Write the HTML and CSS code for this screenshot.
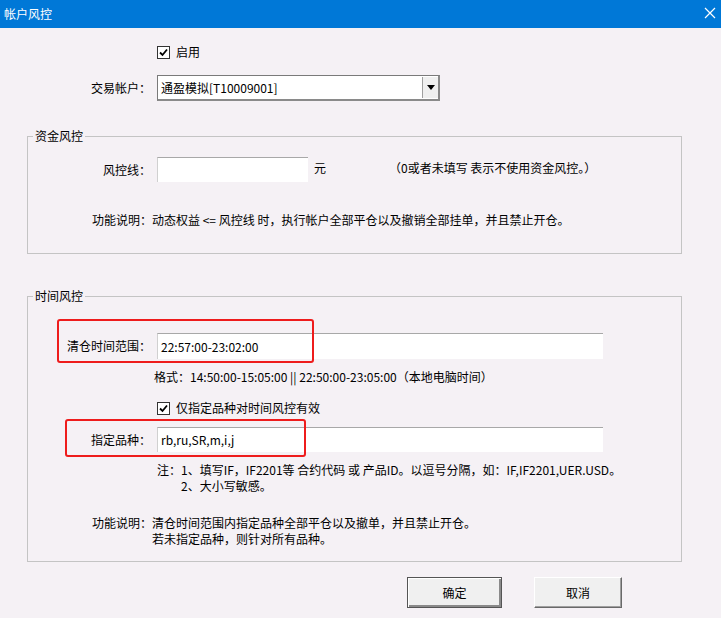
FILE: index.html
```html
<!DOCTYPE html>
<html lang="zh-CN">
<head>
    <meta charset="UTF-8">
    <title>帐户风控</title>
    <link rel="stylesheet" href="styles.css">
</head>
<body>

    <div class="titlebar">
        <span class="title">帐户风控</span>
        <svg class="close" width="12" height="12" viewBox="0 0 12 12">
            <path d="M1 1 L11 11 M11 1 L1 11" stroke="#fff" stroke-width="1.2" fill="none"/>
        </svg>
    </div>

    <div class="dialog">
        <div class="row row-enable">
            <label class="check">
                <span class="box"><svg width="11" height="11" viewBox="0 0 11 11"><path d="M2 5.5 L4.5 8 L9 2.5" stroke="#000" stroke-width="1.8" fill="none"/></svg></span>
                启用
            </label>
        </div>

        <div class="row row-account">
            <span class="label">交易帐户：</span>
            <div class="combo">
                <span class="combo-text">通盈模拟[T10009001]</span>
                <span class="combo-btn"><svg width="8" height="5" viewBox="0 0 8 5"><path d="M0 0 H8 L4 5 Z" fill="#000"/></svg></span>
            </div>
        </div>

        <fieldset class="group group-money">
            <legend>资金风控</legend>
            <div class="row row-line">
                <span class="label">风控线：</span>
                <div class="input input-short"></div>
                <span class="unit">元</span>
                <span class="hint">（0或者未填写 表示不使用资金风控。）</span>
            </div>
            <div class="desc desc-money">
                <span class="desc-label">功能说明：</span>
                <div>动态权益 &lt;= 风控线 时，执行帐户全部平仓以及撤销全部挂单，并且禁止开仓。</div>
            </div>
        </fieldset>

        <fieldset class="group group-time">
            <legend>时间风控</legend>
            <div class="row row-range">
                <span class="mark mark-range"></span>
                <span class="label">清仓时间范围：</span>
                <div class="input input-long">22:57:00-23:02:00</div>
            </div>
            <div class="format">格式：14:50:00-15:05:00 || 22:50:00-23:05:00（本地电脑时间）</div>

            <div class="row row-only">
                <label class="check">
                    <span class="box"><svg width="11" height="11" viewBox="0 0 11 11"><path d="M2 5.5 L4.5 8 L9 2.5" stroke="#000" stroke-width="1.8" fill="none"/></svg></span>
                    仅指定品种对时间风控有效
                </label>
            </div>

            <div class="row row-kind">
                <span class="mark mark-kind"></span>
                <span class="label">指定品种：</span>
                <div class="input input-long">rb,ru,SR,m,i,j</div>
            </div>

            <div class="note">
                <span class="note-label">注：</span>
                <div>
                    <div>1、填写IF，IF2201等 合约代码 或 产品ID。以逗号分隔，如：IF,IF2201,UER.USD。</div>
                    <div>2、大小写敏感。</div>
                </div>
            </div>

            <div class="desc desc-time">
                <span class="desc-label">功能说明：</span>
                <div>
                    <div>清仓时间范围内指定品种全部平仓以及撤单，并且禁止开仓。</div>
                    <div>若未指定品种，则针对所有品种。</div>
                </div>
            </div>
        </fieldset>

        <div class="buttons">
            <button class="btn btn-default">确定</button>
            <button class="btn">取消</button>
        </div>
    </div>

</body>
</html>
```

FILE: styles.css
```css
body {
    margin: 0;
    padding: 0;
    width: 721px;
    height: 618px;
    overflow: hidden;
    background-color: #f5f1f5;
    font-family: "Noto Sans CJK SC", "DejaVu Sans", sans-serif;
    font-size: 12px;
    line-height: 16px;
    color: #000;
}

.titlebar {
    height: 28px;
    background: #0078d7;
    display: flex;
    align-items: center;
    justify-content: space-between;
    padding: 0 5px 0 4px;
}

.title {
    color: white;
    font-size: 12px;
}

.close {
    margin-top: -3px;
}

.row {
    display: flex;
    align-items: center;
    position: relative;
}

.label {
    width: 151px;
    text-align: right;
    flex-shrink: 0;
    margin-right: 6px;
}

.check {
    display: flex;
    align-items: center;
}

.box {
    width: 11px;
    height: 11px;
    border: 1px solid #333;
    background: white;
    margin-right: 6px;
    display: flex;
}

.row-enable {
    margin-top: 16px;
    padding-left: 157px;
}

.row-account {
    margin-top: 15px;
}

.combo {
    width: 280px;
    height: 23px;
    border: 1px solid #7a7a7a;
    border-right: 2px solid #8a8a8a;
    border-bottom: 2px solid #8a8a8a;
    background: white;
    display: flex;
    align-items: center;
    justify-content: space-between;
}

.combo-text {
    padding-left: 3px;
}

.combo-btn {
    width: 15px;
    height: 21px;
    background: #f0f0f0;
    border-left: 1px solid #a0a0a0;
    display: flex;
    align-items: center;
    justify-content: center;
}

.group {
    margin: 0 39px 0 27px;
    padding: 0;
    border: 1px solid #c4c4c4;
    min-width: 0;
}

.group legend {
    margin-left: 5px;
    padding: 0 2px;
    line-height: 16px;
}

.group .label {
    width: 123px;
}

.group-money {
    margin-top: 27px;
    padding-bottom: 25px;
}

.row-line {
    margin-top: 13px;
}

.input {
    height: 25px;
    background: white;
    border-top: 1px solid #a8a8a8;
    border-left: 1px solid #d0d0d0;
    box-sizing: border-box;
    padding-left: 3px;
    display: flex;
    align-items: center;
}

.input-short {
    width: 151px;
}

.input-long {
    width: 446px;
}

.unit {
    margin-left: 6px;
    margin-top: -3px;
}

.hint {
    margin-left: 63px;
    margin-top: -3px;
}

.desc {
    display: flex;
    padding-left: 64px;
}

.desc-money {
    margin-top: 30px;
}

.group-time {
    margin-top: 34px;
    padding-bottom: 14px;
}

.row-range {
    margin-top: 29px;
}

.row-range .input {
    height: 26px;
}

.format {
    margin-top: 10px;
    padding-left: 126px;
}

.row-only {
    margin-top: 15px;
    padding-left: 129px;
}

.row-kind {
    margin-top: 11px;
}

.note {
    display: flex;
    margin-top: 10px;
    padding-left: 129px;
}

.desc-time {
    margin-top: 21px;
}

.mark {
    position: absolute;
    border: 2px solid #ee1c1c;
    border-radius: 3px;
    box-sizing: border-box;
}

.mark-range {
    left: 29px;
    top: -14px;
    width: 257px;
    height: 44px;
}

.mark-kind {
    left: 37px;
    top: -8px;
    width: 241px;
    height: 38px;
}

.buttons {
    display: flex;
    margin-top: 15px;
    padding-left: 407px;
}

.btn {
    height: 31px;
    width: 88px;
    font-family: "Noto Sans CJK SC", sans-serif;
    font-size: 12px;
    background: #f0f0f0;
    border: 1px solid;
    border-color: #fff #696969 #696969 #fff;
    box-shadow: inset -1px -1px 0 #a0a0a0;
    padding: 0;
    margin-right: 32px;
}

.btn-default {
    width: 95px;
    border: 1px solid #555;
    box-shadow: inset 1px 1px 0 #fff, inset -2px -2px 0 #8a8a8a;
}
```
